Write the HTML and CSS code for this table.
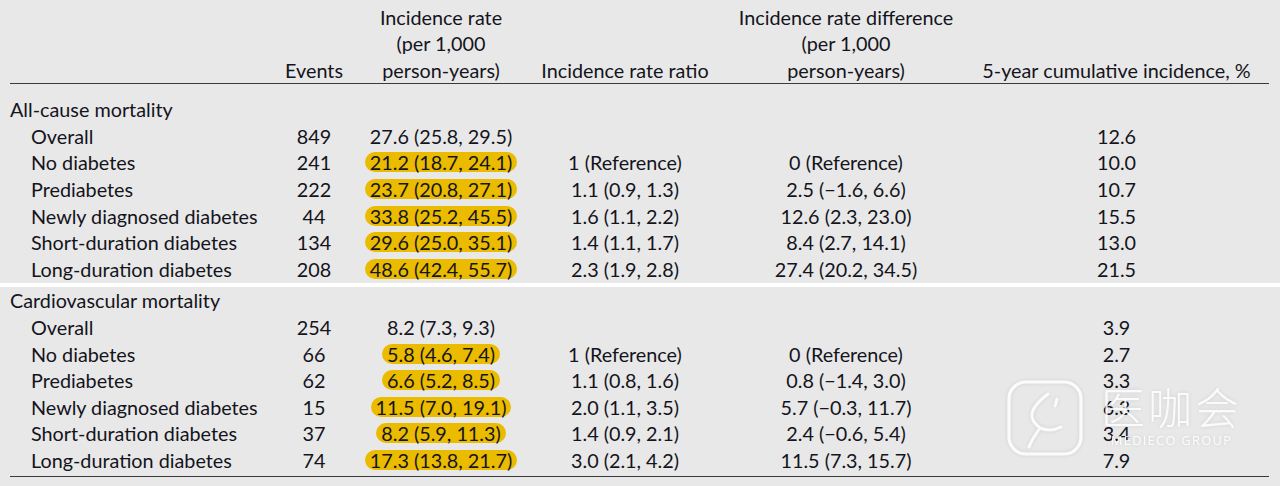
FILE: index.html
```html
<!DOCTYPE html>
<html lang="en">
<head>
<meta charset="utf-8">
<title>Incidence table</title>
<link rel="stylesheet" href="styles.css">
</head>
<body>
<div class="page">
  <div class="thead">
    <div class="cell"></div>
    <div class="cell c">Events</div>
    <div class="cell c">Incidence rate<br>(per 1,000<br>person-years)</div>
    <div class="cell c">Incidence rate ratio</div>
    <div class="cell c">Incidence rate difference<br>(per 1,000<br>person-years)</div>
    <div class="cell c">5-year cumulative incidence, %</div>
  </div>

  <div class="section first">
    <div class="row"><div class="cell group">All-cause mortality</div></div>
    <div class="row"><div class="cell sub">Overall</div><div class="cell c">849</div><div class="cell c">27.6 (25.8, 29.5)</div><div class="cell c"></div><div class="cell c"></div><div class="cell c">12.6</div></div>
    <div class="row"><div class="cell sub">No diabetes</div><div class="cell c">241</div><div class="cell c"><span class="hl">21.2 (18.7, 24.1)</span></div><div class="cell c">1 (Reference)</div><div class="cell c">0 (Reference)</div><div class="cell c">10.0</div></div>
    <div class="row"><div class="cell sub">Prediabetes</div><div class="cell c">222</div><div class="cell c"><span class="hl">23.7 (20.8, 27.1)</span></div><div class="cell c">1.1 (0.9, 1.3)</div><div class="cell c">2.5 (−1.6, 6.6)</div><div class="cell c">10.7</div></div>
    <div class="row"><div class="cell sub">Newly diagnosed diabetes</div><div class="cell c">44</div><div class="cell c"><span class="hl">33.8 (25.2, 45.5)</span></div><div class="cell c">1.6 (1.1, 2.2)</div><div class="cell c">12.6 (2.3, 23.0)</div><div class="cell c">15.5</div></div>
    <div class="row"><div class="cell sub">Short-duration diabetes</div><div class="cell c">134</div><div class="cell c"><span class="hl">29.6 (25.0, 35.1)</span></div><div class="cell c">1.4 (1.1, 1.7)</div><div class="cell c">8.4 (2.7, 14.1)</div><div class="cell c">13.0</div></div>
    <div class="row"><div class="cell sub">Long-duration diabetes</div><div class="cell c">208</div><div class="cell c"><span class="hl">48.6 (42.4, 55.7)</span></div><div class="cell c">2.3 (1.9, 2.8)</div><div class="cell c">27.4 (20.2, 34.5)</div><div class="cell c">21.5</div></div>
  </div>

  <div class="separator"></div>

  <div class="section last">
    <div class="row"><div class="cell group">Cardiovascular mortality</div></div>
    <div class="row"><div class="cell sub">Overall</div><div class="cell c">254</div><div class="cell c">8.2 (7.3, 9.3)</div><div class="cell c"></div><div class="cell c"></div><div class="cell c">3.9</div></div>
    <div class="row"><div class="cell sub">No diabetes</div><div class="cell c">66</div><div class="cell c"><span class="hl">5.8 (4.6, 7.4)</span></div><div class="cell c">1 (Reference)</div><div class="cell c">0 (Reference)</div><div class="cell c">2.7</div></div>
    <div class="row"><div class="cell sub">Prediabetes</div><div class="cell c">62</div><div class="cell c"><span class="hl">6.6 (5.2, 8.5)</span></div><div class="cell c">1.1 (0.8, 1.6)</div><div class="cell c">0.8 (−1.4, 3.0)</div><div class="cell c">3.3</div></div>
    <div class="row"><div class="cell sub">Newly diagnosed diabetes</div><div class="cell c">15</div><div class="cell c"><span class="hl">11.5 (7.0, 19.1)</span></div><div class="cell c">2.0 (1.1, 3.5)</div><div class="cell c">5.7 (−0.3, 11.7)</div><div class="cell c">6.3</div></div>
    <div class="row"><div class="cell sub">Short-duration diabetes</div><div class="cell c">37</div><div class="cell c"><span class="hl">8.2 (5.9, 11.3)</span></div><div class="cell c">1.4 (0.9, 2.1)</div><div class="cell c">2.4 (−0.6, 5.4)</div><div class="cell c">3.4</div></div>
    <div class="row"><div class="cell sub">Long-duration diabetes</div><div class="cell c">74</div><div class="cell c"><span class="hl">17.3 (13.8, 21.7)</span></div><div class="cell c">3.0 (2.1, 4.2)</div><div class="cell c">11.5 (7.3, 15.7)</div><div class="cell c">7.9</div></div>
  </div>

  <div class="watermark">
    <svg class="wm-logo" width="76" height="76" viewBox="0 0 76 76">
      <rect x="2" y="2" width="72" height="72" rx="17" ry="17" fill="none" stroke="#ffffff" stroke-width="3.2"/>
      <path d="M41 14 C33 20 24 29 25 37 C26 43 31 46 33 48 C28 55 24 61 22 67" fill="none" stroke="#ffffff" stroke-width="3" stroke-linecap="round"/>
      <path d="M33 48 C38 50 46 51 54 47" fill="none" stroke="#ffffff" stroke-width="3" stroke-linecap="round"/>
      <path d="M50 19 L48 26" fill="none" stroke="#ffffff" stroke-width="3" stroke-linecap="round"/>
    </svg>
    <div class="wm-text">
      <div class="wm-cn">医咖会</div>
      <div class="wm-en">MEDIECO GROUP</div>
    </div>
  </div>
</div>
</body>
</html>
```

FILE: styles.css
```css
html, body {
  margin: 0;
  padding: 0;
  background: #e8e8e8;
}

.page {
  position: relative;
  width: 1280px;
  height: 486px;
  overflow: hidden;
  font-family: "Lato", "Open Sans", sans-serif;
  font-size: 19.8px;
  color: #14141c;
  padding-top: 4px;
  box-sizing: border-box;
}

.thead,
.row {
  display: grid;
  grid-template-columns: 258px 92px 162px 206px 236px 305px;
  margin-left: 10px;
  width: 1259px;
}

.thead {
  line-height: 26.4px;
  align-items: end;
  border-bottom: 1px solid #3a3a3a;
}

.cell {
  white-space: nowrap;
}

.c {
  text-align: center;
}

.row {
  line-height: 26.6px;
  height: 26.6px;
  align-items: center;
}

.group {
  grid-column: 1 / span 6;
}

.sub {
  padding-left: 21px;
}

.section.first {
  padding-top: 12px;
}

.separator {
  height: 4px;
  margin-top: 1px;
  background: #ffffff;
}

.section.last {
  margin-left: 10px;
  width: 1259px;
  padding-bottom: 2px;
  border-bottom: 1px solid #3a3a3a;
}

.section.last .row {
  margin-left: 0;
}

.hl {
  display: inline-block;
  background: #ebbb00;
  border-radius: 10px;
  padding: 0 5px;
  line-height: 20px;
}

.watermark {
  position: absolute;
  left: 1007px;
  top: 380px;
  display: flex;
  align-items: flex-start;
  gap: 18px;
  opacity: 0.85;
  filter: drop-shadow(0 0 2px rgba(0, 0, 0, 0.12));
}

.wm-logo {
  display: block;
}

.wm-text {
  display: flex;
  flex-direction: column;
  align-items: center;
  padding-top: 2px;
}

.wm-cn {
  font-family: "Noto Sans CJK SC", sans-serif;
  font-weight: 300;
  font-size: 44px;
  line-height: 48px;
  color: #ffffff;
  letter-spacing: 3px;
}

.wm-en {
  font-family: "Open Sans", sans-serif;
  font-size: 13px;
  line-height: 16px;
  color: #ffffff;
  letter-spacing: 1.2px;
  margin-top: 2px;
}
```
